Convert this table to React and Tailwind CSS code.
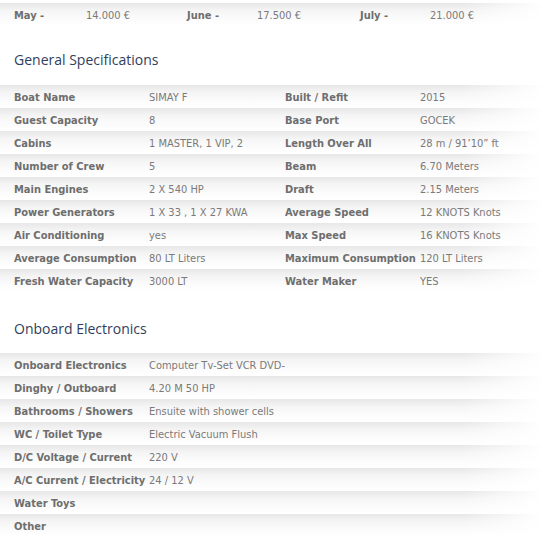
import React from "react";

const general = [
  ["Boat Name", "SIMAY F", "Built / Refit", "2015"],
  ["Guest Capacity", "8", "Base Port", "GOCEK"],
  ["Cabins", "1 MASTER, 1 VIP, 2", "Length Over All", "28 m / 91\u201910\u201d ft"],
  ["Number of Crew", "5", "Beam", "6.70 Meters"],
  ["Main Engines", "2 X 540 HP", "Draft", "2.15 Meters"],
  ["Power Generators", "1 X 33 , 1 X 27 KWA", "Average Speed", "12 KNOTS Knots"],
  ["Air Conditioning", "yes", "Max Speed", "16 KNOTS Knots"],
  ["Average Consumption", "80 LT Liters", "Maximum Consumption", "120 LT Liters"],
  ["Fresh Water Capacity", "3000 LT", "Water Maker", "YES"],
];

const electronics = [
  ["Onboard Electronics", "Computer Tv-Set VCR DVD-"],
  ["Dinghy / Outboard", "4.20 M 50 HP"],
  ["Bathrooms / Showers", "Ensuite with shower cells"],
  ["WC / Toilet Type", "Electric Vacuum Flush"],
  ["D/C Voltage / Current", "220 V"],
  ["A/C Current / Electricity", "24 / 12 V"],
  ["Water Toys", ""],
  ["Other", ""],
];

const rowBg =
  "bg-[linear-gradient(to_right,rgba(255,255,255,0)_85%,#fff_100%),linear-gradient(to_bottom,#e7e7e7_0%,#f5f5f5_35%,#fbfbfb_70%,#ffffff_100%)]";

function Label({ children }) {
  return (
    <div className="font-bold text-[#6e6e6e] whitespace-nowrap">{children}</div>
  );
}
function Value({ children }) {
  return <div className="text-[#7a7a7a] whitespace-nowrap">{children}</div>;
}

export default function App() {
  return (
    <div className="w-[543px] h-[545px] bg-white overflow-hidden font-['DejaVu_Sans_Condensed','Liberation_Sans',sans-serif] text-[11px] leading-[14px]">
      <div className={`mt-[3px] h-[22px] flex items-start pt-[6px] pl-[14px] ${rowBg}`}>
        <div className="w-[72px] font-bold text-[#6e6e6e]">May -</div>
        <div className="w-[101px] text-[#7a7a7a]">14.000 €</div>
        <div className="w-[70px] font-bold text-[#6e6e6e]">June -</div>
        <div className="w-[103px] text-[#7a7a7a]">17.500 €</div>
        <div className="w-[70px] font-bold text-[#6e6e6e]">July -</div>
        <div className="text-[#7a7a7a]">21.000 €</div>
      </div>

      <h2 className="mt-[26px] pl-[14px] text-[14px] leading-[18px] text-[#2f3e5c] font-['Open_Sans',sans-serif]">
        General Specifications
      </h2>

      <div className="mt-[16px]">
        {general.map((r) => (
          <div
            key={r[0]}
            className={`h-[23px] flex items-start pt-[6px] pl-[14px] ${rowBg} border-b border-white`}
          >
            <div className="w-[135px]"><Label>{r[0]}</Label></div>
            <div className="w-[136px]"><Value>{r[1]}</Value></div>
            <div className="w-[135px]"><Label>{r[2]}</Label></div>
            <div className="flex-1"><Value>{r[3]}</Value></div>
          </div>
        ))}
      </div>

      <h2 className="mt-[28px] pl-[14px] text-[14px] leading-[18px] text-[#2f3e5c] font-['Open_Sans',sans-serif]">
        Onboard Electronics
      </h2>

      <div className="mt-[15px]">
        {electronics.map((r) => (
          <div
            key={r[0]}
            className={`h-[23px] flex items-start pt-[6px] pl-[14px] ${rowBg} border-b border-white`}
          >
            <div className="w-[135px]"><Label>{r[0]}</Label></div>
            <div className="flex-1"><Value>{r[1]}</Value></div>
          </div>
        ))}
      </div>
    </div>
  );
}
